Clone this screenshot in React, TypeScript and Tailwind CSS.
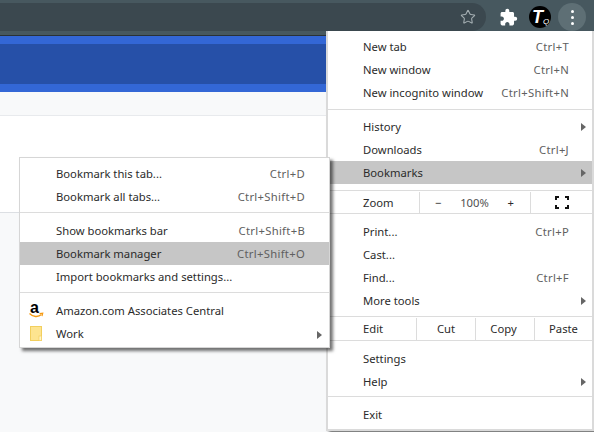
import React from 'react';
import { Star } from 'lucide-react';
import { MdExtension } from 'react-icons/md';

function Arrow({ sub }: { sub?: boolean }) {
  return <span className={`absolute ${sub ? 'right-[7px]' : 'right-[6px]'} top-1/2 -mt-[4px] w-0 h-0 border-y-[4px] border-y-transparent border-l-[5px] border-l-[#666666]`} />;
}

function Sep({ className }: { className: string }) {
  return <div className={`h-[1px] bg-[#dcdcdc] ${className}`} />;
}

// hi: text sits a pixel higher, as the first rows of each menu do in the picture
function Row({ label, keys, on, arrow, icon, sub, hi }: { label: string; keys?: string; on?: boolean; arrow?: boolean; icon?: React.ReactNode; sub?: boolean; hi?: boolean }) {
  return (
    <div className={`relative h-[23px] ${hi ? 'pb-[1px]' : 'pt-[1px]'} flex items-center justify-between ${sub ? 'pl-[36px] pr-[24px]' : 'pl-[35px] pr-[23px]'} ${on ? 'bg-[#c6c6c6]' : ''}`}>
      {icon}
      <span>{label}</span>
      {keys && <span className="text-[#606060] tracking-[0.3px]">{keys}</span>}
      {arrow && <Arrow sub={sub} />}
    </div>
  );
}

function AmazonIcon() {
  return (
    <span className="absolute left-[9px] top-[2px] w-[15px] h-[18px]">
      <span className="absolute left-[1px] -top-[2px] text-[16px] leading-[16px] font-bold text-black [font-family:'Liberation_Sans',sans-serif]">a</span>
      <svg className="absolute left-0 top-[10px]" width="15" height="7" viewBox="0 0 15 7" fill="none">
        <path d="M0.5 1.5C4 5 9 5.5 12.5 2.5" stroke="#f59a13" strokeWidth="1.4" />
        <path d="M10.5 1.5L13.8 1.2L13 4.2" stroke="#f59a13" strokeWidth="1.1" />
      </svg>
    </span>
  );
}

function FolderIcon() {
  return (
    <svg className="absolute left-[10px] top-[3px]" width="12" height="15" viewBox="0 0 12 15">
      <rect x="0.5" y="0.5" width="11" height="14" fill="#fde490" stroke="#f2cf5e" />
      <rect x="9" y="10" width="2.5" height="4.5" fill="#fff4c8" stroke="#f2cf5e" strokeWidth="0.7" />
    </svg>
  );
}

export default function App() {
  return (
    <div className="relative w-[594px] h-[432px] overflow-hidden bg-[#f8f9fa] text-[11.25px] leading-[16px] text-[#2b2b2b] [font-family:'Noto_Sans',sans-serif]">
      {/* browser toolbar */}
      <div className="h-[35px] bg-[#47585f] flex items-start pt-[3px]">
        <div className="w-[486px] h-[28px] bg-[#3b484f] rounded-r-[14px] flex items-center justify-end pr-[10px]">
          <Star size={16} strokeWidth={1.6} className="text-[#a4aeb2]" />
        </div>
        <div className="flex-1 h-[28px] flex items-center">
          <MdExtension size={19} className="text-white ml-[13px]" />
          <div className="relative w-[22px] h-[22px] rounded-full bg-black ml-[11px] text-white overflow-hidden">
            <span className="absolute left-[3px] top-[1px] text-[18px] leading-[20px] font-bold italic [font-family:'Liberation_Sans',sans-serif]">T</span>
            <span className="absolute left-[14px] top-[11px] text-[8px] leading-[10px] italic [font-family:'Liberation_Sans',sans-serif]">Q</span>
          </div>
          <div className="w-[28px] h-[28px] rounded-full bg-[#5e6f75] ml-[7px] flex flex-col items-center justify-center gap-[3px]">
            <span className="w-[3px] h-[3px] rounded-full bg-white" />
            <span className="w-[3px] h-[3px] rounded-full bg-white" />
            <span className="w-[3px] h-[3px] rounded-full bg-white" />
          </div>
        </div>
      </div>

      {/* page behind the menus */}
      <div className="h-[1px] bg-[#2a3236]" />
      <div className="h-[8px] bg-[#3367d6]" />
      <div className="h-[40px] bg-[#2650a8]" />
      <div className="h-[8px] bg-[#3367d6]" />
      <div className="h-[23px] bg-[#f8f9fa]" />
      <div className="h-[1px] bg-[#e8eaed]" />
      <div className="h-[96px] bg-white" />
      <div className="h-[1px] bg-[#dcdfe3]" />

      {/* chrome menu */}
      <div className="absolute left-[326px] top-[31px] w-[268px] h-[400px] bg-white border-x-[2px] border-b-[2px] border-x-[#dadada] border-b-[#dadada] pt-[5px] shadow-[3px_3px_3px_rgba(0,0,0,0.5)]">
        <Row hi label="New tab" keys="Ctrl+T" />
        <Row hi label="New window" keys="Ctrl+N" />
        <Row hi label="New incognito window" keys="Ctrl+Shift+N" />
        <Sep className="mt-[4px] mb-[5px]" />
        <Row label="History" arrow />
        <Row label="Downloads" keys="Ctrl+J" />
        <Row label="Bookmarks" arrow on />
        <Sep className="mt-[6px]" />
        <div className="h-[22px] pt-[1px] flex items-center">
          <div className="w-[91px] pl-[35px]">Zoom</div>
          <div className="w-[112px] h-full border-x border-[#dcdcdc] flex items-center justify-between pl-[15px] pr-[16px]">
            <span>−</span>
            <span className="text-[#505050]">100%</span>
            <span>+</span>
          </div>
          <div className="flex-1 flex justify-center">
            <svg width="14" height="13" viewBox="0 0 14 13" fill="none" stroke="#111" strokeWidth="2">
              <path d="M1 4V1H4M10 1H13V4M13 9V12H10M4 12H1V9" />
            </svg>
          </div>
        </div>
        <Sep className="mb-[6px]" />
        <Row label="Print..." keys="Ctrl+P" />
        <Row label="Cast..." />
        <Row label="Find..." keys="Ctrl+F" />
        <Row label="More tools" arrow />
        <Sep className="mt-[4px]" />
        <div className="h-[23px] pt-[1px] flex items-center">
          <div className="w-[88px] pl-[35px]">Edit</div>
          <div className="w-[59px] h-full border-l border-[#dcdcdc] flex items-center justify-center">Cut</div>
          <div className="w-[59px] h-full border-l border-[#dcdcdc] flex items-center justify-center pr-[3px]">Copy</div>
          <div className="flex-1 h-full border-l border-[#dcdcdc] flex items-center justify-center">Paste</div>
        </div>
        <Sep className="mb-[6px]" />
        <Row label="Settings" />
        <Row label="Help" arrow />
        <Sep className="mt-[3px] mb-[6px]" />
        <Row label="Exit" />
      </div>

      {/* bookmarks submenu */}
      <div className="absolute left-[19px] top-[157px] w-[311px] h-[191px] bg-white border border-[#d6d6d6] pt-[5px] shadow-[3px_3px_3px_rgba(0,0,0,0.55)]">
        <Row sub hi label="Bookmark this tab..." keys="Ctrl+D" />
        <Row sub hi label="Bookmark all tabs..." keys="Ctrl+Shift+D" />
        <Sep className="mt-[3px] mb-[6px]" />
        <Row sub label="Show bookmarks bar" keys="Ctrl+Shift+B" />
        <Row sub label="Bookmark manager" keys="Ctrl+Shift+O" on />
        <Row sub label="Import bookmarks and settings..." />
        <Sep className="mt-[4px] mb-[7px]" />
        <Row sub hi label="Amazon.com Associates Central" icon={<AmazonIcon />} />
        <Row sub hi label="Work" arrow icon={<FolderIcon />} />
      </div>
    </div>
  );
}
